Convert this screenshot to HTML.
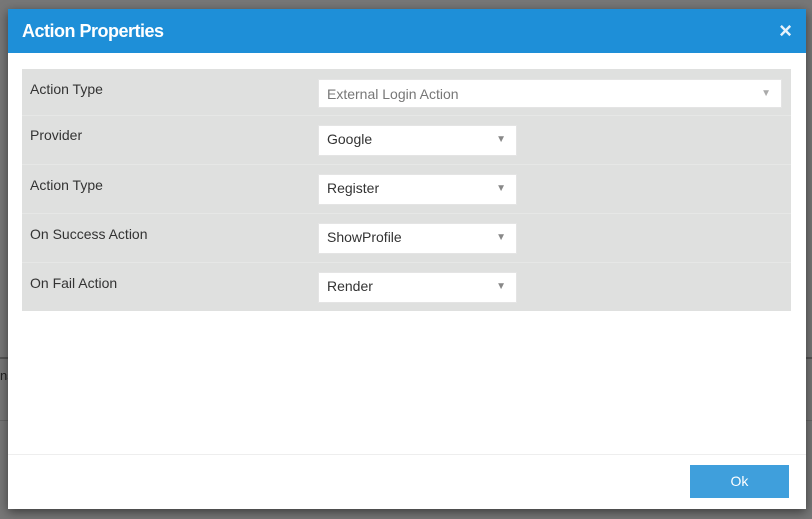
<!DOCTYPE html>
<html><head><style>
body{margin:0;width:812px;height:519px;background:#777;position:relative;overflow:hidden;font-family:"Liberation Sans",sans-serif;}
.bgline{position:absolute;left:0;width:812px;height:2px;background:#555}
.modal{position:absolute;left:8px;top:9px;width:798px;height:500px;background:#fff;box-shadow:0 3px 10px rgba(0,0,0,.5);}
.hdr{height:44px;background:#1e8fd8;color:#fff;position:relative}
.hdr .t{position:absolute;left:14px;top:12px;font-size:18px;font-weight:bold;letter-spacing:-0.5px}
.hdr .x{position:absolute;right:14px;top:9px;font-size:22px;font-weight:bold;color:#e8f2fb}
.panel{position:absolute;left:14px;top:60px;width:769px;height:242px;background:#dfe0df}
.row{position:absolute;left:0;width:769px;border-top:1px solid #e6e7e6}
.lbl{position:absolute;left:8px;font-size:14px;color:#333}
.sel{position:absolute;left:296px;background:#fff;font-size:14px;color:#333;border:1px solid #e4e4e4;box-sizing:border-box}
.sel span{position:absolute;left:8px}
.sel i{position:absolute;right:10px;font-style:normal;font-size:10px;color:#888}
.foot{position:absolute;left:0;top:445px;width:798px;border-top:1px solid #eee}
.ok{position:absolute;left:682px;top:456px;width:99px;height:33px;background:#3f9fdc;color:#fff;font-size:14px;text-align:center;line-height:33px}
</style></head><body>
<div class="bgline" style="top:357px"></div>
<div style="position:absolute;left:0;top:368px;font-size:13px;color:#222">ns</div>
<div class="bgline" style="top:420px;height:1px;background:#666"></div>
<div class="modal">
<div class="hdr"><div class="t">Action Properties</div><div class="x">×</div></div>
<div class="panel">
<div class="lbl" style="top:12px">Action Type</div>
<div class="sel" style="top:10px;width:464px;height:29px;color:#777"><span style="top:6px">External Login Action</span><i style="top:8px;color:#aaa">▼</i></div>
<div class="row" style="top:46px"></div>
<div class="lbl" style="top:58px">Provider</div>
<div class="sel" style="top:56px;width:199px;height:31px"><span style="top:5px">Google</span><i style="top:8px">▼</i></div>
<div class="row" style="top:95px"></div>
<div class="lbl" style="top:108px">Action Type</div>
<div class="sel" style="top:105px;width:199px;height:31px"><span style="top:5px">Register</span><i style="top:8px">▼</i></div>
<div class="row" style="top:144px"></div>
<div class="lbl" style="top:157px">On Success Action</div>
<div class="sel" style="top:154px;width:199px;height:31px"><span style="top:5px">ShowProfile</span><i style="top:8px">▼</i></div>
<div class="row" style="top:193px"></div>
<div class="lbl" style="top:206px">On Fail Action</div>
<div class="sel" style="top:203px;width:199px;height:31px"><span style="top:5px">Render</span><i style="top:8px">▼</i></div>
</div>
<div class="foot"></div>
<div class="ok">Ok</div>
</div>
</body></html>
